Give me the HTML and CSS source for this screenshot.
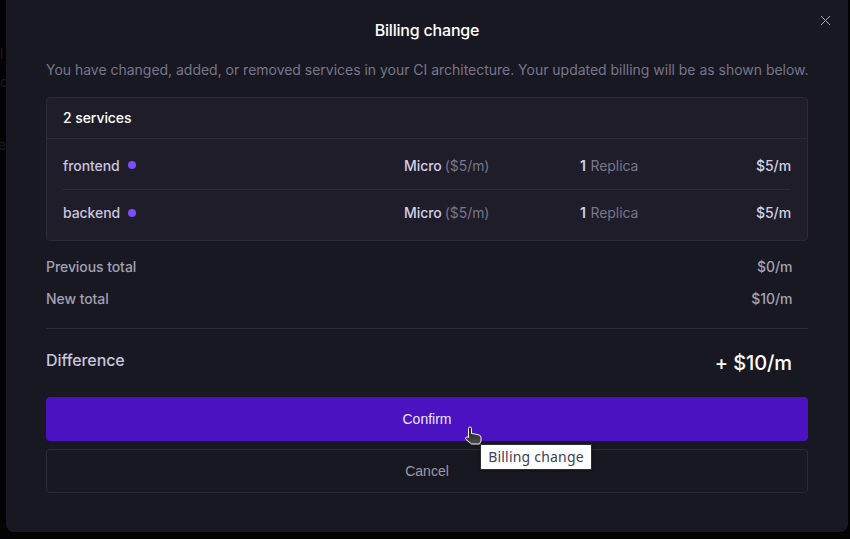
FILE: index.html
```html
<!DOCTYPE html>
<html lang="en">

<head>
    <meta charset="UTF-8">
    <meta name="viewport" content="width=device-width, initial-scale=1.0">
    <title>Billing change</title>
    <link rel="stylesheet" href="styles.css">
</head>

<body>
    <div class="backdrop">
        <span class="ghost ghost-1">l</span>
        <span class="ghost ghost-2">c</span>
        <span class="ghost ghost-3">e</span>
    </div>

    <div class="dialog">
        <button class="close" aria-label="Close">
            <svg width="11" height="11" viewBox="0 0 11 11" fill="none" stroke="#a9a7b5" stroke-width="1">
                <path d="M1 1L10 10M10 1L1 10" />
            </svg>
        </button>

        <h1 class="title">Billing change</h1>
        <p class="desc">You have changed, added, or removed services in your CI architecture. Your updated billing will be as shown below.</p>

        <div class="services">
            <div class="services-head">2 services</div>
            <div class="services-body">
                <div class="row">
                    <div class="name">frontend <span class="dot"></span></div>
                    <div class="plan">Micro <span class="muted">($5/m)</span></div>
                    <div class="replica"><b>1</b> <span class="muted">Replica</span></div>
                    <div class="price">$5/m</div>
                </div>
                <div class="row">
                    <div class="name">backend <span class="dot"></span></div>
                    <div class="plan">Micro <span class="muted">($5/m)</span></div>
                    <div class="replica"><b>1</b> <span class="muted">Replica</span></div>
                    <div class="price">$5/m</div>
                </div>
            </div>
        </div>

        <div class="totals">
            <div class="total-line"><span>Previous total</span><span>$0/m</span></div>
            <div class="total-line"><span>New total</span><span>$10/m</span></div>
        </div>

        <div class="difference">
            <span class="diff-label">Difference</span>
            <span class="diff-value">+ $10/m</span>
        </div>

        <button class="btn btn-confirm">Confirm</button>
        <button class="btn btn-cancel">Cancel</button>
    </div>

    <svg class="cursor" width="20" height="21" viewBox="0 0 20 21">
        <defs>
            <linearGradient id="hand" x1="0" y1="0" x2="0" y2="1">
                <stop offset="0" stop-color="#1c1c1c" />
                <stop offset="1" stop-color="#4c4c4c" />
            </linearGradient>
        </defs>
        <path d="M4.500 3.500a1.500 1.500 0 0 1 3 0V8.500L11 9l4 1q2 .5 2 2.500V16l-1.500 3H7.500L2 14.500q-1-1.500.5-2.500 1-.5 2 .5z" fill="url(#hand)" stroke="#f4f4f4" stroke-width="1" />
    </svg>
    <div class="tooltip">Billing change</div>
</body>

</html>
```

FILE: styles.css
```css
* {
    margin: 0;
    padding: 0;
    box-sizing: border-box;
}

html,
body {
    height: 100%;
    overflow: hidden;
}

body {
    background-color: #030304;
    font-family: Inter, "Liberation Sans", sans-serif;
    font-size: 14px;
    position: relative;
}

.backdrop {
    position: absolute;
    left: 0;
    top: 0;
    width: 6px;
    height: 100%;
    overflow: hidden;
}

.ghost {
    position: absolute;
    left: 0;
    color: #1a1a1e;
    font-size: 14px;
}

.ghost-1 {
    top: 45px;
}

.ghost-2 {
    top: 73px;
}

.ghost-3 {
    top: 136px;
    left: -2px;
}

.dialog {
    width: 842px;
    height: 533px;
    margin-left: 6px;
    margin-top: -1px;
    padding: 0 40px;
    background-color: #181822;
    border-radius: 0 0 8px 8px;
    display: flex;
    flex-direction: column;
    position: relative;
}

.close {
    position: absolute;
    right: 17px;
    top: 16px;
    width: 11px;
    height: 11px;
    background: none;
    border: 0;
    display: flex;
}

.title {
    margin-top: 21px;
    height: 20px;
    font-size: 16px;
    line-height: 20px;
    font-weight: 500;
    letter-spacing: -0.2px;
    color: #fff;
    text-align: center;
}

.desc {
    margin-top: 20px;
    height: 20px;
    line-height: 20px;
    font-size: 14px;
    letter-spacing: -0.02px;
    color: #77768a;
    white-space: nowrap;
}

.services {
    margin-top: 17px;
    height: 144px;
    background-color: #1e1d29;
    border: 1px solid #2b2a37;
    border-radius: 4px;
}

.services-head {
    height: 41px;
    padding: 0 16px;
    line-height: 39px;
    font-weight: 500;
    letter-spacing: -0.07px;
    color: #fff;
    border-bottom: 1px solid #2b2a37;
}

.services-body {
    margin: 0 16px;
}

.row {
    height: 51px;
    padding-top: 2px;
    display: grid;
    grid-template-columns: 341px 176px 1fr auto;
    align-items: center;
    font-weight: 500;
    letter-spacing: -0.07px;
    color: #d3d0e6;
    border-bottom: 1px solid #2b2a37;
}

.row:last-child {
    padding-top: 0;
    padding-bottom: 6px;
    border-bottom: 0;
}

.name {
    display: flex;
    align-items: center;
    gap: 8px;
    color: #c9c6de;
}

.dot {
    width: 8px;
    height: 8px;
    border-radius: 50%;
    background-color: #7c4dff;
}

.plan .muted {
    margin-left: -0.5px;
}

.muted {
    font-weight: 400;
    color: #77768a;
}

.replica b {
    font-weight: 600;
    margin-right: 1px;
}

.totals {
    margin-top: 9px;
    padding-bottom: 14px;
    border-bottom: 1px solid #2b2a37;
}

.total-line {
    height: 32px;
    display: flex;
    justify-content: space-between;
    align-items: center;
    font-weight: 500;
    letter-spacing: -0.07px;
    color: #a3a1b3;
}

.total-line span:last-child {
    padding-right: 15.6px;
}

.difference {
    height: 68px;
    padding-bottom: 6px;
    display: flex;
    justify-content: space-between;
    align-items: center;
}

.diff-label {
    font-size: 16px;
    font-weight: 500;
    letter-spacing: -0.1px;
    color: #c9c6de;
}

.diff-value {
    font-size: 20px;
    font-weight: 500;
    letter-spacing: -0.1px;
    color: #fff;
    padding-right: 16px;
    padding-top: 5px;
}

.btn {
    height: 44px;
    border-radius: 4px;
    font-family: "Liberation Sans", Arial, sans-serif;
    font-size: 14px;
}

.btn-confirm {
    background-color: #4a12c0;
    border: 0;
    color: #ece6ff;
}

.btn-cancel {
    margin-top: 8px;
    background: none;
    border: 1px solid #2b2a37;
    color: #9b9aa6;
}

.cursor {
    position: absolute;
    left: 464px;
    top: 425px;
}

.tooltip {
    position: absolute;
    left: 480px;
    top: 444px;
    width: 112px;
    height: 26px;
    background-color: #fff;
    border: 1px solid #2b2b33;
    box-shadow: 0 1px 4px rgba(0, 0, 0, 0.35);
    color: #3b4252;
    font-family: "Noto Sans", sans-serif;
    font-size: 14px;
    letter-spacing: 0.2px;
    line-height: 24px;
    text-align: center;
    white-space: nowrap;
}
```
